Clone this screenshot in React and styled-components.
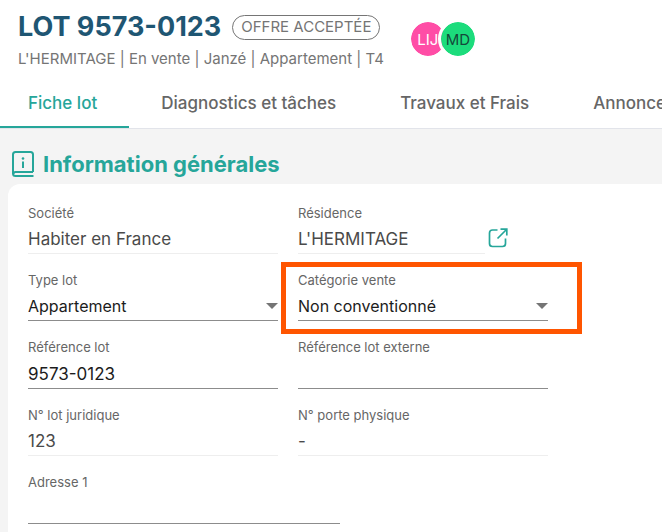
import React, { useState } from "react";
import styled, { createGlobalStyle } from "styled-components";

const GlobalStyle = createGlobalStyle`
  * {
    box-sizing: border-box;
  }
  body {
    margin: 0;
    background: #f4f4f4;
    font-family: "Inter", "Liberation Sans", sans-serif;
    overflow: hidden;
  }
`;

const Header = styled.header`
  display: flex;
  align-items: flex-start;
  gap: 24px;
  padding: 10px 18px 0;
  height: 78px;
  background: white;
`;

const TitleRow = styled.div`
  display: flex;
  flex-direction: row;
  align-items: center;
  gap: 11px;
`;

const Title = styled.h1`
  margin: 0;
  font-size: 27px;
  line-height: 34px;
  font-weight: 700;
  color: #1f5673;
  white-space: nowrap;
`;

const Status = styled.span`
  height: 25px;
  padding: 0 8px;
  border: 1px solid #757575;
  border-radius: 13px;
  font-size: 15px;
  line-height: 21px;
  color: #757575;
  white-space: nowrap;
`;

const Subtitle = styled.p`
  margin: 5px 0 0;
  font-size: 15px;
  line-height: 20px;
  color: #757575;
  white-space: nowrap;
`;

const Avatars = styled.div`
  display: flex;
  flex-direction: row;
  padding-top: 9px;
`;

const Avatar = styled.span`
  display: flex;
  align-items: center;
  justify-content: center;
  width: 40px;
  height: 40px;
  margin-right: -10px;
  border: 3px solid white;
  border-radius: 50%;
  background: ${(props) => props.$background};
  background-clip: padding-box;
  color: ${(props) => props.$color};
  font-size: 15px;
`;

const Tabs = styled.nav`
  display: flex;
  flex-direction: row;
  height: 51px;
  background: white;
  border-bottom: 1px solid #e2e4ea;
  overflow: hidden;
`;

const Tab = styled.button`
  flex: none;
  padding: 2px 32px 0;
  border: none;
  border-bottom: 2px solid ${(props) => (props.$active ? "#26a69a" : "transparent")};
  background: none;
  font-family: inherit;
  font-size: 17px;
  font-weight: 500;
  color: ${(props) => (props.$active ? "#26a69a" : "#666666")};
  cursor: pointer;

  &:first-child {
    padding-left: 28px;
  }
`;

const SectionTitle = styled.h2`
  display: flex;
  align-items: center;
  gap: 9px;
  margin: 0;
  padding: 16px 12px 1px;
  height: 55px;
  font-size: 22px;
  font-weight: 700;
  color: #26a69a;
`;

const Card = styled.form`
  display: flex;
  flex-direction: column;
  gap: 18px;
  margin-left: 8px;
  padding: 21px 20px;
  background: white;
  border-radius: 12px 0 0 0;
`;

const Row = styled.div`
  display: flex;
  flex-direction: row;
  gap: 20px;
`;

const FieldWrapper = styled.div`
  position: relative;
  display: flex;
  flex-direction: column;
  flex: 0 1 ${(props) => (props.$wide ? "312px" : "250px")};
  min-width: 0;
`;

const Label = styled.label`
  font-size: 13px;
  line-height: 16px;
  color: #666666;
`;

const Line = styled.div`
  display: flex;
  align-items: center;
  gap: 3px;
`;

const Input = styled.input`
  flex: 1;
  min-width: 0;
  height: ${(props) => (props.readOnly ? "33px" : "34px")};
  padding: ${(props) => (props.readOnly ? "3px" : "4px")} 0 0;
  border: none;
  border-bottom: 1px solid ${(props) => (props.readOnly ? "#eeeeee" : "#8c8c8c")};
  border-radius: 0;
  outline: none;
  background: transparent;
  font-family: inherit;
  font-size: 17px;
  color: ${(props) => (props.readOnly ? "#4a4a4a" : "#1c1c1c")};
`;

const SelectBox = styled.div`
  display: flex;
  align-items: center;
  height: 33px;
  padding-top: 4px;
  border-bottom: 1px solid #8c8c8c;

  & select {
    flex: 1;
    min-width: 0;
    margin-right: -12px;
    padding: 0;
    border: none;
    outline: none;
    appearance: none;
    background: transparent;
    font-family: inherit;
    font-size: 16px;
    color: #1c1c1c;
  }
  & svg {
    pointer-events: none;
  }
`;

const LinkIcon = styled.a`
  display: flex;
  flex: none;
  width: 60px;
  color: #26a69a;
`;

// Frame drawn over the form around the field to look at
const Highlight = styled.div`
  position: absolute;
  inset: -10px -34px -13px -17px;
  border: 5px solid #ff5500;
  pointer-events: none;
`;

const InfoBook = () => (
  <svg width="22" height="26" viewBox="0 0 22 26" fill="none" stroke="currentColor" strokeWidth="2">
    <path d="M21 21V3.5Q21 1 18.5 1H3.5Q1 1 1 3.5V22.5Q1 25 3.5 25H21.5" />
    <path d="M1.5 23Q1.500 21 3.500 21H21" />
    <path d="M11 10.500V17" strokeWidth="2" />
    <circle cx="11" cy="7.500" r="1.300" fill="currentColor" stroke="none" />
  </svg>
);

const OpenIcon = () => (
  <svg width="20" height="20" viewBox="0 0 20 20" fill="none" stroke="currentColor" strokeWidth="1.700">
    <path d="M9.500 2H4.500Q1.500 2 1.500 5V15.500Q1.500 18.500 4.500 18.500H14.500Q17.500 18.500 17.500 15.500V10.500" />
    <path d="M9.500 10.500L18.500 1.500M12.500 1.200H18.800V7.500" />
  </svg>
);

const Arrow = () => (
  <svg width="12" height="6" viewBox="0 0 12 6">
    <path d="M0 0H12L6 6Z" fill="#757575" />
  </svg>
);

const Field = ({ id, label, value, readOnly, wide, link }) => (
  <FieldWrapper $wide={wide}>
    <Label htmlFor={id}>{label}</Label>
    <Line>
      <Input id={id} type="text" defaultValue={value} readOnly={readOnly} />
      {link && (
        <LinkIcon href="#residence" aria-label={label}>
          <OpenIcon />
        </LinkIcon>
      )}
    </Line>
  </FieldWrapper>
);

const SelectField = ({ id, label, options, highlighted }) => {
  const [selected, setSelected] = useState(options[0]);
  return (
    <FieldWrapper>
      <Label htmlFor={id}>{label}</Label>
      <SelectBox>
        <select id={id} value={selected} onChange={(e) => setSelected(e.target.value)}>
          {options.map((option) => (
            <option key={option}>{option}</option>
          ))}
        </select>
        <Arrow />
      </SelectBox>
      {highlighted && <Highlight />}
    </FieldWrapper>
  );
};

const tabs = ["Fiche lot", "Diagnostics et tâches", "Travaux et Frais", "Annonces"];

const App = () => {
  const [activeTab, setActiveTab] = useState(tabs[0]);
  return (
    <>
      <GlobalStyle />
      <Header>
        <div>
          <TitleRow>
            <Title>LOT 9573-0123</Title>
            <Status>OFFRE ACCEPTÉE</Status>
          </TitleRow>
          <Subtitle>L'HERMITAGE | En vente | Janzé | Appartement | T4</Subtitle>
        </div>
        <Avatars>
          <Avatar $background="#ff4da6" $color="white">LIJ</Avatar>
          <Avatar $background="#1cdc7c" $color="#14493a">MD</Avatar>
        </Avatars>
      </Header>
      <Tabs>
        {tabs.map((tab) => (
          <Tab key={tab} type="button" $active={tab === activeTab} onClick={() => setActiveTab(tab)}>
            {tab}
          </Tab>
        ))}
      </Tabs>
      <SectionTitle>
        <InfoBook />
        Information générales
      </SectionTitle>
      <Card>
        <Row>
          <Field id="societe" label="Société" value="Habiter en France" readOnly />
          <Field id="residence" label="Résidence" value="L'HERMITAGE" readOnly link />
        </Row>
        <Row>
          <SelectField id="type" label="Type lot" options={["Appartement"]} />
          <SelectField id="categorie" label="Catégorie vente" options={["Non conventionné"]} highlighted />
        </Row>
        <Row>
          <Field id="reference" label="Référence lot" value="9573-0123" />
          <Field id="externe" label="Référence lot externe" value="" />
        </Row>
        <Row>
          <Field id="juridique" label="N° lot juridique" value="123" readOnly />
          <Field id="porte" label="N° porte physique" value="-" readOnly />
        </Row>
        <Row>
          <Field id="adresse" label="Adresse 1" value="" wide />
        </Row>
      </Card>
    </>
  );
};

export default App;
